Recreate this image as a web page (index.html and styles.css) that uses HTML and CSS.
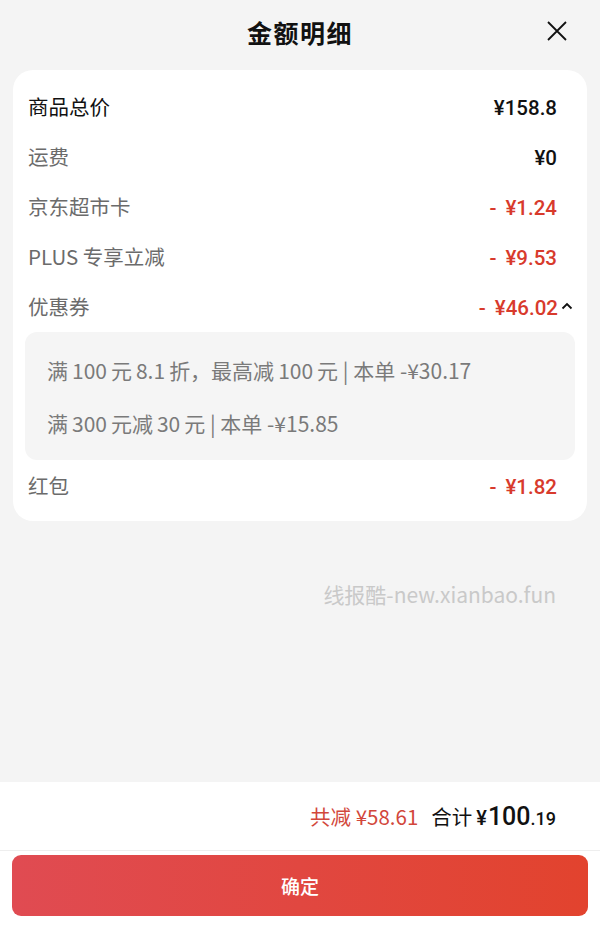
FILE: index.html
```html
<!DOCTYPE html>
<html>
<head>
    <meta charset="UTF-8">
    <meta name="viewport" content="width=device-width, initial-scale=1.0">
    <title>金额明细</title>
    <link rel="stylesheet" href="styles.css">
</head>
<body>
    <div class="sheet">
        <div class="sheet-header">
            <h1>金额明细</h1>
            <button class="close-button" aria-label="关闭">
                <svg width="20" height="20" viewBox="0 0 20 20">
                    <path d="M1 1 L19 19 M19 1 L1 19" stroke="#111" stroke-width="1.8" fill="none"/>
                </svg>
            </button>
        </div>

        <div class="detail-card">
            <div class="row">
                <span class="label strong">商品总价</span>
                <span class="value">¥158.8</span>
            </div>
            <div class="row">
                <span class="label">运费</span>
                <span class="value">¥0</span>
            </div>
            <div class="row">
                <span class="label">京东超市卡</span>
                <span class="value minus"><span class="sign">-</span>¥1.24</span>
            </div>
            <div class="row">
                <span class="label">PLUS 专享立减</span>
                <span class="value minus"><span class="sign">-</span>¥9.53</span>
            </div>
            <div class="row">
                <span class="label">优惠券</span>
                <span class="value minus"><span class="sign">-</span>¥46.02<svg class="chevron" width="12" height="8" viewBox="0 0 12 8"><path d="M1.5 6.5 L6 2 L10.5 6.5" stroke="#111" stroke-width="1.8" fill="none"/></svg></span>
            </div>
            <div class="coupon-box">
                <div class="coupon-line">满<span class="num">100</span>元<span class="num">8.1</span>折，最高减<span class="num">100</span>元 | 本单 -¥30.17</div>
                <div class="coupon-line">满<span class="num">300</span>元减<span class="num">30</span>元 | 本单 -¥15.85</div>
            </div>
            <div class="row">
                <span class="label">红包</span>
                <span class="value minus"><span class="sign">-</span>¥1.82</span>
            </div>
        </div>

        <div class="watermark">线报酷-new.xianbao.fun</div>
    </div>

    <div class="footer">
        <div class="summary">
            <span class="saved">共减 ¥58.61</span>
            <span class="total-label">合计</span>
            <span class="total"><span class="yen">¥</span><span class="int">100</span><span class="dec">.19</span></span>
        </div>
        <div class="confirm-wrap">
            <button class="confirm-button">确定</button>
        </div>
    </div>
</body>
</html>
```

FILE: styles.css
```css
body {
    margin: 0;
    height: 927px;
    display: flex;
    flex-direction: column;
    background-color: #f4f4f4;
    font-family: "Noto Sans CJK SC", "Noto Sans", sans-serif;
    color: #111;
    overflow: hidden;
}

.sheet {
    flex: 1;
    background-color: #f4f4f4;
    border-radius: 12px 12px 0 0;
}

.sheet-header {
    height: 64px;
    display: flex;
    align-items: center;
    justify-content: center;
    position: relative;
}

.sheet-header h1 {
    margin: 0;
    font-size: 25px;
    font-weight: 700;
    letter-spacing: 1.5px;
    color: #111;
}

.close-button {
    position: absolute;
    right: 33px;
    top: 21px;
    width: 20px;
    height: 20px;
    padding: 0;
    border: none;
    background: none;
}

.detail-card {
    margin: 6px 13px 0;
    background-color: #fff;
    border-radius: 20px;
    padding: 11px 12px;
}

.row {
    height: 50px;
    display: flex;
    align-items: center;
    justify-content: space-between;
    padding: 0 18px 0 3px;
}

.label {
    font-size: 20.5px;
    color: #6b6b6b;
}

.label.strong {
    color: #111;
}

.value {
    font-family: Roboto, "Noto Sans", sans-serif;
    font-size: 20.5px;
    font-weight: 500;
    color: #111;
    display: flex;
    align-items: center;
    padding-top: 3px;
}

.value.minus {
    color: #d83a2c;
}

.sign {
    margin-right: 9px;
}

.chevron {
    margin-right: -16px;
    margin-left: 3px;
    margin-top: -3px;
}

.coupon-box {
    background-color: #f5f5f5;
    border-radius: 12px;
    padding: 11px 22px;
    margin-top: 1px;
}

.coupon-line {
    height: 53px;
    display: flex;
    align-items: center;
    font-size: 21px;
    color: #7a7a7a;
    white-space: pre;
}

.coupon-line .num {
    margin: 0 4px;
}

.watermark {
    margin-top: 58px;
    padding-right: 44px;
    text-align: right;
    font-size: 21px;
    color: #c9c9c9;
}

.footer {
    background-color: #fff;
}

.summary {
    height: 68px;
    display: flex;
    align-items: center;
    justify-content: flex-end;
    padding-right: 44px;
    border-bottom: 1px solid #eee;
    font-size: 20.5px;
}

.saved {
    color: #d2473b;
    margin-right: 13px;
}

.total-label {
    margin-right: 4px;
}

.total {
    font-family: Roboto, "Noto Sans", sans-serif;
    display: flex;
    align-items: baseline;
}

.total .yen {
    font-size: 20px;
    font-weight: 500;
    margin-right: 1px;
}

.total .int {
    font-size: 25px;
    font-weight: 500;
}

.total .dec {
    font-size: 18px;
    font-weight: 500;
}

.confirm-wrap {
    padding: 4px 12px 11px;
}

.confirm-button {
    width: 100%;
    height: 61px;
    border: none;
    border-radius: 9px;
    background: linear-gradient(90deg, #e04b52, #e2432e);
    color: #fff;
    font-family: "Noto Sans CJK SC", sans-serif;
    font-size: 19px;
    font-weight: 500;
}
```
